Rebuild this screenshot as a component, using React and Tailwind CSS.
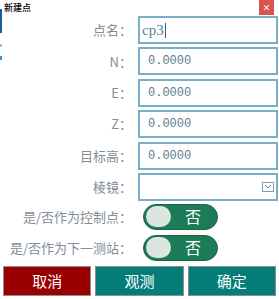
import { useState } from "react";

const cjk = { fontFamily: '"Noto Sans CJK SC", "Noto Sans", sans-serif' };

const fields = [
  { label: "点名：", value: "cp3", mono: false },
  { label: "N：", value: "0.0000", mono: true },
  { label: "E：", value: "0.0000", mono: true },
  { label: "Z：", value: "0.0000", mono: true },
  { label: "目标高：", value: "0.0000", mono: true },
];

const Toggle = ({ on, onClick }) => (
  <button
    onClick={onClick}
    className="w-[75px] h-[26px] rounded-full bg-[#1b7c57] border border-[#176647] flex items-center px-[2px] cursor-pointer"
  >
    <span className="w-[25px] h-[21px] rounded-full bg-[#dde5e0]" />
    <span className="flex-1 text-center text-white text-[16px] leading-none pb-[1px]">
      {on ? "是" : "否"}
    </span>
  </button>
);

const App = () => {
  const [ctrl, setCtrl] = useState(false);
  const [next, setNext] = useState(false);

  return (
    <div className="w-[279px] h-[299px] bg-white relative overflow-hidden" style={cjk}>
      {/* left edge remnant */}
      <div className="absolute left-0 top-[9px] w-[2px] h-[24px] bg-[#1d5f92]" />
      <div className="absolute left-0 top-[44px] w-[2px] h-[3px] bg-[#8fc3e0]" />
      <div className="absolute left-0 top-[56px] w-[2px] h-[4px] bg-[#3b8fd0]" />

      {/* Title */}
      <div className="h-[16px] flex justify-between">
        <span className="pl-[4px] pt-[2px] text-[9px] leading-[11px] text-black font-medium">新建点</span>
        <span className="w-[15px] h-[15px] mr-[5px] bg-[#d9534f] text-white text-[8px] leading-[15px] text-center font-bold">
          ×
        </span>
      </div>

      {/* Form */}
      <div className="flex flex-col gap-[3.4px]">
        {fields.map((f) => (
          <div key={f.label} className="flex items-center h-[28px]">
            <label className="w-[138px] pr-[6px] text-right text-[13px] text-[#838d96]">{f.label}</label>
            <div className="w-[140px] h-[28px] border-2 border-[#79aec8] flex items-center">
              <span
                className={f.mono ? "pl-[8px] text-[12px] text-[#5f7c8e]" : "pl-[2px] text-[15px] text-[#5a7f99]"}
                style={{ fontFamily: f.mono ? '"Liberation Mono", monospace' : '"Liberation Serif", serif' }}
              >
                {f.value}
              </span>
              {!f.mono && <span className="w-[1px] h-[15px] bg-[#2c5f82] ml-[1px]" />}
            </div>
          </div>
        ))}
        <div className="flex items-center h-[28px]">
          <label className="w-[138px] pr-[6px] text-right text-[13px] text-[#838d96]">棱镜：</label>
          <div className="w-[140px] h-[28px] border-2 border-[#79aec8] flex items-center justify-end pr-[2px]">
            <span className="w-[12px] h-[10px] border border-[#7f9fba] flex items-center justify-center">
              <svg width="8" height="5" viewBox="0 0 8 5">
                <path d="M1 1 L4 4 L7 1" fill="none" stroke="#5f86a6" strokeWidth="1" />
              </svg>
            </span>
          </div>
        </div>
      </div>

      {/* Toggles */}
      <div className="mt-[3px] flex flex-col gap-[5px]">
        <div className="flex items-center h-[26px]">
          <label className="w-[138px] pr-[6px] text-right text-[13px] text-[#838d96]">是/否作为控制点：</label>
          <div className="pl-[5px]">
            <Toggle on={ctrl} onClick={() => setCtrl((p) => !p)} />
          </div>
        </div>
        <div className="flex items-center h-[26px]">
          <label className="w-[138px] pr-[6px] text-right text-[13px] text-[#838d96] whitespace-nowrap">是/否作为下一测站：</label>
          <div className="pl-[5px]">
            <Toggle on={next} onClick={() => setNext((p) => !p)} />
          </div>
        </div>
      </div>

      {/* Buttons */}
      <div className="mt-[5px] px-[3px] flex gap-[4px]">
        <button className="w-[89px] h-[30px] bg-[#990000] border border-[#8f8f8f] text-white text-[15px]">取消</button>
        <button className="w-[89px] h-[30px] bg-[#047d79] border border-[#8f8f8f] text-white text-[15px]">观测</button>
        <button className="w-[89px] h-[30px] bg-[#047d79] border border-[#8f8f8f] text-white text-[15px]">确定</button>
      </div>
    </div>
  );
};

export default App;
